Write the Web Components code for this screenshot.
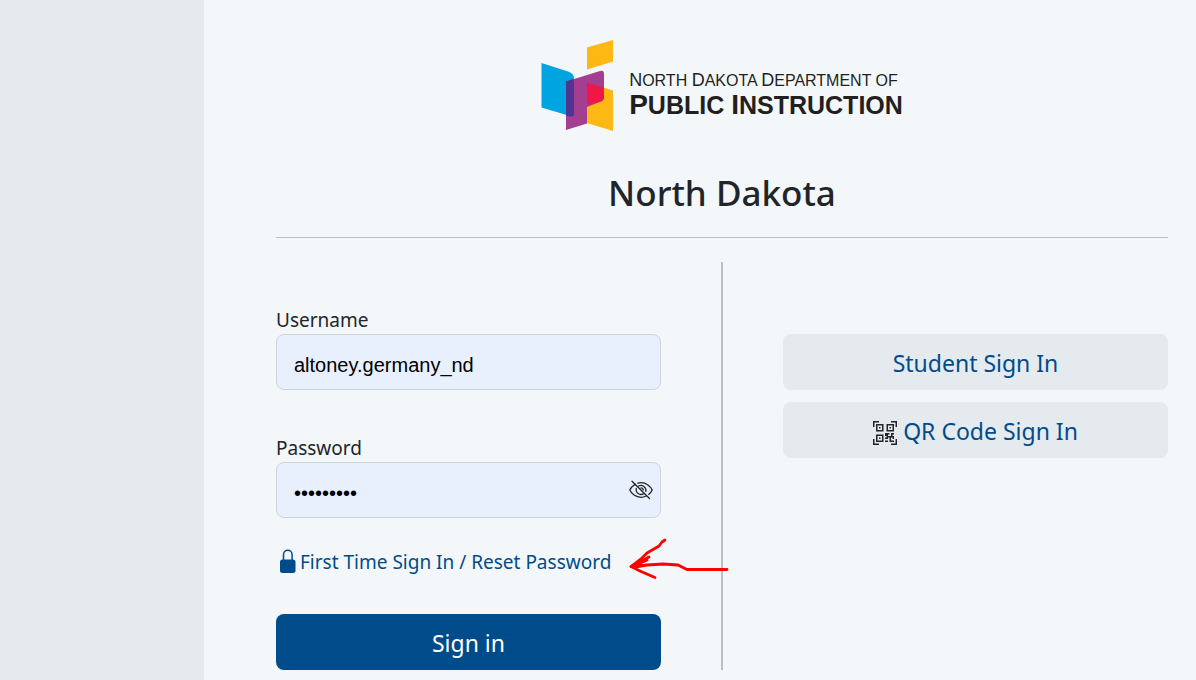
<!DOCTYPE html>
<html lang="en">
<head>
<meta charset="utf-8">
<meta name="viewport" content="width=device-width, initial-scale=1">
<title>North Dakota - Sign in</title>
<style>
  :root {
    --font-family: "Segoe UI", "Noto Sans", sans-serif;
    --page: #f3f7fa;
    --muted: #e5eaee;
    --brand: #004c8a;
    --text: #212529;
    --rule: #b9bec3;
  }
  body {
    margin: 0;
    background: var(--page);
    color: var(--text);
    font-family: var(--font-family);
  }
</style>
</head>
<body>

<login-layout>
  <state-logo slot="header"></state-logo>
  <h1 slot="header">North Dakota</h1>

  <text-field slot="form" label="Username" name="username" value="altoney.germany_nd"></text-field>
  <text-field slot="form" label="Password" name="password" type="password" value="password1"></text-field>
  <reset-link slot="form" href="#reset">First Time Sign In / Reset Password</reset-link>
  <action-button slot="form" variant="primary">Sign in</action-button>

  <action-button slot="other">Student Sign In</action-button>
  <action-button slot="other"><qr-icon></qr-icon>QR Code Sign In</action-button>
</login-layout>

<script>
/**
 * @name LoginLayout
 * @description Side band, header and two columns with a divider
 * slots: header, form, other
 */
class LoginLayout extends HTMLElement {
  constructor() {
    super();
    this.attachShadow({ mode: 'open' }).innerHTML = `
      <style>
        :host {
          display: grid;
          grid-template-columns: 204px 1fr;
          min-height: 100vh;
        }
        aside {
          background: var(--muted);
        }
        main {
          padding: 36px 28px 10px 72px;
        }
        header {
          display: flex;
          flex-direction: column;
          align-items: center;
          gap: 35px;
          padding-bottom: 20px;
          border-bottom: 1px solid var(--rule);
        }
        ::slotted(h1) {
          margin: 0;
          font-size: 35px;
          line-height: 48px;
          font-weight: 500;
        }
        .columns {
          display: grid;
          grid-template-columns: 1fr 2px 1fr;
          column-gap: 60px;
          margin-top: 24px;
        }
        form {
          display: flex;
          flex-direction: column;
          gap: 28px;
          padding-top: 28px;
        }
        .divider {
          background: var(--rule);
        }
        .other {
          display: flex;
          flex-direction: column;
          gap: 12px;
          padding-top: 72px;
        }
      </style>
      <aside></aside>
      <main>
        <header><slot name="header"></slot></header>
        <div class="columns">
          <form><slot name="form"></slot></form>
          <div class="divider"></div>
          <div class="other"><slot name="other"></slot></div>
        </div>
      </main>
    `;
  }
}

/**
 * @name StateLogo
 * @description Department mark with its two line name
 */
class StateLogo extends HTMLElement {
  constructor() {
    super();
    this.attachShadow({ mode: 'open' }).innerHTML = `
      <style>
        :host {
          display: flex;
          align-items: center;
          gap: 16px;
          color: #231f20;
          font-family: "Liberation Sans", Arial, sans-serif;
          white-space: nowrap;
        }
        svg {
          display: block;
        }
        .name {
          padding-top: 18px;
        }
        p {
          margin: 0;
        }
        .top {
          font-size: 16px;
          line-height: 20px;
        }
        .top b {
          font-size: 18px;
          font-weight: 400;
        }
        .bottom {
          font-size: 25px;
          line-height: 28px;
          font-weight: 700;
        }
        .bottom b {
          font-size: 28px;
        }
      </style>
      <svg width="72" height="98" viewBox="541 36 72 98" aria-hidden="true">
        <path fill="#fdb813" d="M587 47.500L613 40v21.500L587 69.500z"/>
        <path fill="#00a4e0" d="M541.500 63l26.500 8.500q6 2 6 7V114q0 3-4 2l-28.500-8.500z"/>
        <path fill="#fdb813" d="M587 82.500l26 8V131l-26-8z"/>
        <path fill="#a33e91" d="M566 81.500L600 71q4-1 4 3v23q0 3-3 4.500L587 107v16.500L566 130z"/>
        <path fill="#51348f" d="M566 81.500l7.500-2.500q.5 2 .5 4V114q0 3-4 2.500l-4-1z"/>
        <path fill="#ef1746" d="M587 82.500l17 5.500v9q0 3-3 4.500L587 105z"/>
      </svg>
      <div class="name">
        <p class="top"><b>N</b>ORTH <b>D</b>AKOTA <b>D</b>EPARTMENT OF</p>
        <p class="bottom"><b>P</b>UBLIC <b>I</b>NSTRUCTION</p>
      </div>
    `;
  }
}

/**
 * @name TextField
 * @param {string} label
 * @param {string} name
 * @param {string} type - text or password, password gets the reveal button
 * @param {string} value
 */
class TextField extends HTMLElement {
  constructor() {
    super();
    this.attachShadow({ mode: 'open' }).innerHTML = `
      <style>
        :host {
          display: block;
          padding-top: 16px;
        }
        label {
          display: block;
          font-size: 19px;
          line-height: 28px;
        }
        .box {
          display: flex;
          align-items: center;
          box-sizing: border-box;
          height: 56px;
          padding-right: 7px;
          background: #e8f0fe;
          border: 1px solid #ced4da;
          border-radius: 8px;
        }
        input {
          flex: 1;
          min-width: 0;
          box-sizing: border-box;
          height: 100%;
          padding: 6px 0 0 17px;
          border: 0;
          outline: 0;
          background: none;
          color: #000;
          font: 20px "Liberation Sans", Arial, sans-serif;
        }
        button {
          padding: 0;
          border: 0;
          background: none;
          color: var(--text);
        }
        svg {
          display: block;
        }
      </style>
      <label for="field"></label>
      <div class="box"><input id="field"></div>
    `;
  }

  connectedCallback() {
    const input = this.shadowRoot.querySelector('input');
    this.shadowRoot.querySelector('label').textContent = this.getAttribute('label');
    input.type = this.getAttribute('type') || 'text';
    input.name = this.getAttribute('name');
    input.value = this.getAttribute('value') || '';

    if (input.type === 'password') {
      const button = document.createElement('button');
      button.type = 'button';
      button.setAttribute('aria-label', 'Show password');
      button.innerHTML = `
        <svg width="24" height="20" viewBox="0 0 24 20" fill="none" stroke="currentColor" stroke-width="1.300" stroke-linecap="round">
          <path d="M6.500 4.200C3.500 5.800 1.500 8.200.8 10c1.700 3.800 6 7.300 11.200 7.300 1.900 0 3.600-.5 5.200-1.300"/>
          <path d="M8.800 3.200c1-.3 2.100-.5 3.200-.5 5.200 0 9.500 3.500 11.200 7.300-.7 1.500-1.900 3.100-3.500 4.400"/>
          <path d="M7.300 8.300c-.8 3.400 1.500 6.200 4.700 6.200.9 0 1.700-.2 2.400-.6M9.600 6c3.700-1.800 8.100 1.300 7.200 5.400"/>
          <path d="M12 7.900c1.300 0 2.100.9 2.200 2M3 1.200L20.500 18.500"/>
        </svg>
      `;
      button.addEventListener('click', () => {
        input.type = input.type === 'password' ? 'text' : 'password';
      });
      this.shadowRoot.querySelector('.box').append(button);
    }
  }
}

/**
 * @name ResetLink
 * @description Lock icon and link, with a hand drawn arrow pointing at it
 * @param {string} href
 */
class ResetLink extends HTMLElement {
  constructor() {
    super();
    this.attachShadow({ mode: 'open' }).innerHTML = `
      <style>
        :host {
          display: block;
          position: relative;
          padding-bottom: 8px;
        }
        a {
          display: flex;
          align-items: center;
          gap: 4px;
          padding-left: 4px;
          color: var(--brand);
          font-size: 19px;
          line-height: 32px;
          white-space: nowrap;
          text-decoration: none;
        }
        .arrow {
          position: absolute;
          top: -10px;
          right: -70px;
          pointer-events: none;
        }
      </style>
      <a>
        <svg width="16" height="26" viewBox="0 0 16 26" aria-hidden="true">
          <path d="M3.500 11V5.500a4.300 4.300 0 0 1 8.600 0V11" fill="none" stroke="currentColor" stroke-width="1.500"/>
          <rect y="10.500" width="15.500" height="13.500" rx="2.500" fill="currentColor"/>
        </svg>
        <span><slot></slot></span>
      </a>
      <svg class="arrow" width="104" height="44" viewBox="628 536 104 44" fill="none" stroke="#f00" stroke-width="2.800" stroke-linecap="round" stroke-linejoin="round" aria-hidden="true">
        <path d="M728 569.500H688l-9-4.500-15-1-16 1-13 2"/>
        <path d="M666 540l-3 2-3 4-12 7-5 5-11 8.500 10 5 14 6"/>
        <path d="M650 557l-9 5-9 4.500 12-1M648 560l-13 6"/>
      </svg>
    `;
  }

  connectedCallback() {
    this.shadowRoot.querySelector('a').href = this.getAttribute('href');
  }
}

/**
 * @name ActionButton
 * @param {string} variant - primary for the filled one
 */
class ActionButton extends HTMLElement {
  constructor() {
    super();
    this.attachShadow({ mode: 'open' }).innerHTML = `
      <style>
        :host {
          display: block;
        }
        button {
          display: flex;
          align-items: center;
          justify-content: center;
          gap: 6px;
          box-sizing: border-box;
          width: 100%;
          height: 56px;
          padding: 2px 0 0;
          border: 0;
          border-radius: 8px;
          background: var(--muted);
          color: var(--brand);
          font-family: var(--font-family);
          font-size: 23px;
          line-height: 32px;
        }
        :host([variant="primary"]) button {
          background: var(--brand);
          color: #fff;
        }
      </style>
      <button type="button"><slot></slot></button>
    `;
  }
}

/**
 * @name QrIcon
 */
class QrIcon extends HTMLElement {
  constructor() {
    super();
    this.attachShadow({ mode: 'open' }).innerHTML = `
      <style>
        :host {
          display: block;
          padding-top: 4px;
          color: var(--text);
        }
        svg {
          display: block;
        }
      </style>
      <svg width="24" height="24" viewBox="0 0 24 24" fill="none" stroke="currentColor" stroke-width="1.500" aria-hidden="true">
        <path d="M.75 6V.75H6M18 .75h5.250V6M23.250 18v5.250H18M6 23.250H.75V18"/>
        <path d="M3.750 3.750h6v6h-6zM14.250 3.750h6v6h-6zM3.750 14.250h6v6h-6z"/>
        <path fill="currentColor" stroke="none" d="M6 6h1.500v1.500H6zM16.500 6H18v1.500h-1.500zM6 16.500h1.500V18H6zM12 12h4.500v1.500H15V15h1.500v1.500H15V18h-1.500v-3H12zM18 12h3v1.500h-1.500V15H18zM16.500 15H21v1.500h-3V18h-1.500zM12 16.500h1.500V18H12zM12 19.500h3V21h-3zM16.500 18H18v1.500h3V21h-4.500zM19.500 16.500H21V18h-1.500z"/>
      </svg>
    `;
  }
}

// register components
customElements.define('login-layout', LoginLayout);
customElements.define('state-logo', StateLogo);
customElements.define('text-field', TextField);
customElements.define('reset-link', ResetLink);
customElements.define('action-button', ActionButton);
customElements.define('qr-icon', QrIcon);
</script>
</body>
</html>
